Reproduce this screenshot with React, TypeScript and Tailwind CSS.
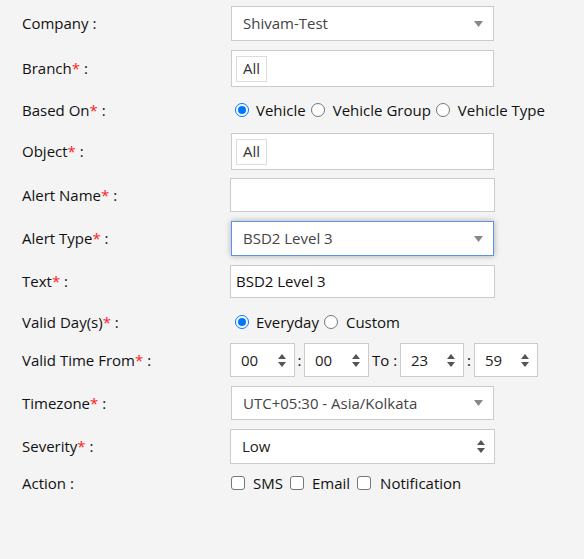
import React from 'react'

function Req() {
  return <span className="text-[#ff1a1a]">*</span>
}

function Label({ text, req }: { text: string; req?: boolean }) {
  return (
    <div className="w-[208px] shrink-0 text-[#111]">
      {text}
      {req && <Req />} :
    </div>
  )
}

function Caret() {
  return (
    <svg width="9" height="6" viewBox="0 0 9 6" className="absolute right-[10px] top-1/2 -translate-y-1/2">
      <path d="M0 0 L9 0 L4.5 6 Z" fill="#888" />
    </svg>
  )
}

function UpDown() {
  return (
    <svg width="8" height="13" viewBox="0 0 8 13" className="shrink-0">
      <path d="M0 5 L8 5 L4 0 Z" fill="#555" />
      <path d="M0 8 L8 8 L4 13 Z" fill="#555" />
    </svg>
  )
}

function Select2({ value, focus }: { value: string; focus?: boolean }) {
  return (
    <div
      className={
        focus
          ? 'relative ml-[1px] flex h-full w-[263px] items-center border border-[#5b94e6] bg-white pl-[11px] text-[#444] shadow-[0_0_6px_rgba(0,0,0,0.3)]'
          : 'relative ml-[1px] flex h-full w-[263px] items-center border border-[#cbcbcb] bg-white pl-[11px] text-[#444]'
      }
    >
      {value}
      <Caret />
    </div>
  )
}

function TagBox() {
  return (
    <div className="ml-[1px] flex h-full w-[263px] items-center border border-[#cbcbcb] bg-white pl-[4px]">
      <span className="flex h-[26px] items-center border border-[#dcdcdc] bg-white px-[6px] text-[#333]">All</span>
    </div>
  )
}

function Radio({ checked }: { checked?: boolean }) {
  return checked ? (
    <span className="flex h-[14px] w-[14px] shrink-0 items-center justify-center rounded-full border-[1.5px] border-[#0075ff] bg-white">
      <span className="block h-[8px] w-[8px] rounded-full bg-[#0075ff]" />
    </span>
  ) : (
    <span className="block h-[14px] w-[14px] shrink-0 rounded-full border border-[#767676] bg-white" />
  )
}

function Check() {
  return <span className="block h-[14px] w-[14px] shrink-0 rounded-[3px] border border-[#767676] bg-white" />
}

function TimeBox({ value, w }: { value: string; w: string }) {
  return (
    <div className={`flex h-full items-center justify-between border border-[#cbcbcb] bg-white pl-[10px] pr-[8px] text-[#222] ${w}`}>
      <span>{value}</span>
      <UpDown />
    </div>
  )
}

export default function App() {
  return (
    <div
      className="min-h-[559px] w-full bg-[#f4f4f4] pl-[22px] pt-[6px] text-[15px] leading-none"
      style={{ fontFamily: '"Open Sans", "Noto Sans", sans-serif' }}
    >
      <div className="flex h-[35px] items-center">
        <Label text="Company" />
        <Select2 value="Shivam-Test" />
      </div>

      <div className="mt-[9px] flex h-[37px] items-center">
        <Label text="Branch" req />
        <TagBox />
      </div>

      <div className="mt-[10px] flex h-[26px] items-center">
        <Label text="Based On" req />
        <div className="flex items-center pl-[5px] text-[#111]">
          <Radio checked />
          <span className="ml-[7px]">Vehicle</span>
          <span className="ml-[5px] flex"><Radio /></span>
          <span className="ml-[8px]">Vehicle Group</span>
          <span className="ml-[5px] flex"><Radio /></span>
          <span className="ml-[8px]">Vehicle Type</span>
        </div>
      </div>

      <div className="mt-[10px] flex h-[37px] items-center">
        <Label text="Object" req />
        <TagBox />
      </div>

      <div className="mt-[8px] flex h-[34px] items-center">
        <Label text="Alert Name" req />
        <div className="h-full w-[265px] border border-[#cbcbcb] bg-white" />
      </div>

      <div className="mt-[9px] flex h-[35px] items-center">
        <Label text="Alert Type" req />
        <Select2 value="BSD2 Level 3" focus />
      </div>

      <div className="mt-[9px] flex h-[33px] items-center">
        <Label text="Text" req />
        <div className="flex h-full w-[265px] items-center border border-[#cbcbcb] bg-white pl-[5px] text-[#111]">
          BSD2 Level 3
        </div>
      </div>

      <div className="mt-[11px] flex h-[26px] items-center">
        <Label text="Valid Day(s)" req />
        <div className="flex items-center pl-[5px] text-[#111]">
          <Radio checked />
          <span className="ml-[7px]">Everyday</span>
          <span className="ml-[5px] flex"><Radio /></span>
          <span className="ml-[8px]">Custom</span>
        </div>
      </div>

      <div className="mt-[8px] flex h-[34px] items-center">
        <Label text="Valid Time From" req />
        <div className="flex h-full items-center text-[#111]">
          <TimeBox value="00" w="w-[65px]" />
          <span className="w-[9px] text-center">:</span>
          <TimeBox value="00" w="w-[65px]" />
          <span className="w-[31px] pl-[3px]">To :</span>
          <TimeBox value="23" w="w-[64px]" />
          <span className="w-[10px] text-center">:</span>
          <TimeBox value="59" w="w-[64px]" />
        </div>
      </div>

      <div className="mt-[9px] flex h-[34px] items-center">
        <Label text="Timezone" req />
        <Select2 value="UTC+05:30 - Asia/Kolkata" />
      </div>

      <div className="mt-[9px] flex h-[35px] items-center">
        <Label text="Severity" req />
        <div className="flex h-full w-[265px] items-center justify-between border border-[#cbcbcb] bg-white pl-[11px] pr-[9px] text-[#222]">
          <span>Low</span>
          <UpDown />
        </div>
      </div>

      <div className="mt-[7px] flex h-[24px] items-center">
        <Label text="Action" />
        <div className="flex items-center pl-[1px] text-[#111]">
          <Check />
          <span className="ml-[8px]">SMS</span>
          <span className="ml-[7px] flex"><Check /></span>
          <span className="ml-[8px]">Email</span>
          <span className="ml-[7px] flex"><Check /></span>
          <span className="ml-[9px]">Notification</span>
        </div>
      </div>
    </div>
  )
}
